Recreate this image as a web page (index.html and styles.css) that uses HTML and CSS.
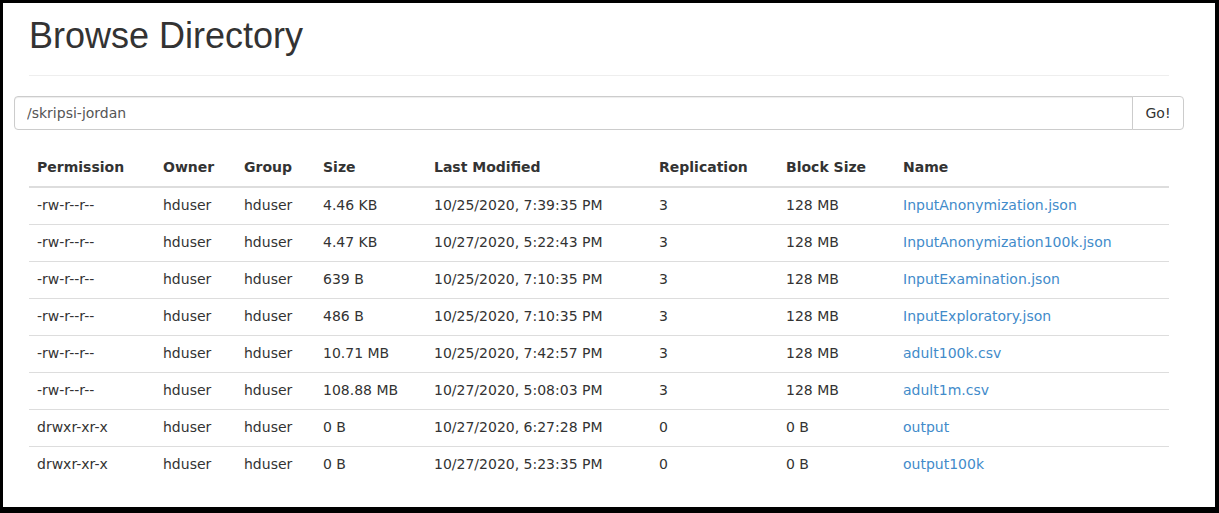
FILE: index.html
```html
<!DOCTYPE html>
<html>
<head>
<meta charset="utf-8">
<link rel="stylesheet" href="styles.css">
</head>
<body>
<div class="frame">
  <div class="container">
    <div class="page-header">
      <h1>Browse Directory</h1>
    </div>
    <form class="input-group">
      <input class="path" type="text" value="/skripsi-jordan">
      <button class="go" type="button">Go!</button>
    </form>
    <table class="listing">
      <thead>
        <tr><th>Permission</th><th>Owner</th><th>Group</th><th>Size</th><th>Last Modified</th><th>Replication</th><th>Block Size</th><th>Name</th></tr>
      </thead>
      <tbody>
        <tr><td>-rw-r--r--</td><td>hduser</td><td>hduser</td><td>4.46 KB</td><td>10/25/2020, 7:39:35 PM</td><td>3</td><td>128 MB</td><td><a href="#">InputAnonymization.json</a></td></tr>
        <tr><td>-rw-r--r--</td><td>hduser</td><td>hduser</td><td>4.47 KB</td><td>10/27/2020, 5:22:43 PM</td><td>3</td><td>128 MB</td><td><a href="#">InputAnonymization100k.json</a></td></tr>
        <tr><td>-rw-r--r--</td><td>hduser</td><td>hduser</td><td>639 B</td><td>10/25/2020, 7:10:35 PM</td><td>3</td><td>128 MB</td><td><a href="#">InputExamination.json</a></td></tr>
        <tr><td>-rw-r--r--</td><td>hduser</td><td>hduser</td><td>486 B</td><td>10/25/2020, 7:10:35 PM</td><td>3</td><td>128 MB</td><td><a href="#">InputExploratory.json</a></td></tr>
        <tr><td>-rw-r--r--</td><td>hduser</td><td>hduser</td><td>10.71 MB</td><td>10/25/2020, 7:42:57 PM</td><td>3</td><td>128 MB</td><td><a href="#">adult100k.csv</a></td></tr>
        <tr><td>-rw-r--r--</td><td>hduser</td><td>hduser</td><td>108.88 MB</td><td>10/27/2020, 5:08:03 PM</td><td>3</td><td>128 MB</td><td><a href="#">adult1m.csv</a></td></tr>
        <tr><td>drwxr-xr-x</td><td>hduser</td><td>hduser</td><td>0 B</td><td>10/27/2020, 6:27:28 PM</td><td>0</td><td>0 B</td><td><a href="#">output</a></td></tr>
        <tr><td>drwxr-xr-x</td><td>hduser</td><td>hduser</td><td>0 B</td><td>10/27/2020, 5:23:35 PM</td><td>0</td><td>0 B</td><td><a href="#">output100k</a></td></tr>
      </tbody>
    </table>
  </div>
</div>
</body>
</html>
```

FILE: styles.css
```css
html, body {
  margin: 0;
  padding: 0;
  background: #000;
}
body {
  padding: 3px 4px 6px 3px;
  font-family: "DejaVu Sans", sans-serif;
  font-size: 14px;
  color: #333;
}
.frame {
  background: #fff;
  height: 504px;
  overflow: hidden;
}
.container {
  width: 1140px;
  margin-left: 11px;
  padding: 0 15px;
}
.page-header {
  padding-top: 10px;
  padding-bottom: 19px;
  border-bottom: 1px solid #eee;
  margin-bottom: 20px;
}
h1 {
  margin: 0;
  font-family: "Liberation Sans", Arial, sans-serif;
  font-weight: 400;
  font-size: 36px;
  line-height: 1.1;
  color: #333;
  padding-top: 3px;
}
.input-group {
  display: flex;
  margin: 0 -15px;
  height: 34px;
}
.path {
  flex: 1;
  box-sizing: border-box;
  height: 34px;
  margin: 0;
  border: 1px solid #ccc;
  border-radius: 4px 0 0 4px;
  padding: 6px 12px;
  font-family: "DejaVu Sans", sans-serif;
  font-size: 14px;
  color: #555;
  outline: none;
  box-shadow: inset 0 1px 1px rgba(0,0,0,0.075);
}
.go {
  box-sizing: border-box;
  height: 34px;
  width: 52px;
  margin: 0 0 0 -1px;
  border: 1px solid #ccc;
  border-radius: 0 4px 4px 0;
  background: #fff;
  font-family: "DejaVu Sans", sans-serif;
  font-size: 14px;
  color: #333;
  padding: 6px 12px;
}
.listing {
  width: 100%;
  border-collapse: collapse;
  margin-top: 19px;
}
.listing th, .listing td {
  text-align: left;
  padding: 8px;
  line-height: 20px;
  vertical-align: top;
  white-space: nowrap;
}
.listing th {
  font-weight: 700;
  padding-bottom: 9px;
  border-bottom: 2px solid #ddd;
}
.listing td {
  padding-top: 7px;
  padding-bottom: 9px;
  border-top: 1px solid #ddd;
}
.listing tbody tr:first-child td {
  border-top: 0;
}
.listing a {
  color: #428bca;
  text-decoration: none;
}
.listing th:nth-child(1) { width: 110px; }
.listing th:nth-child(2) { width: 65px; }
.listing th:nth-child(3) { width: 63px; }
.listing th:nth-child(4) { width: 95px; }
.listing th:nth-child(5) { width: 209px; }
.listing th:nth-child(6) { width: 111px; }
.listing th:nth-child(7) { width: 101px; }
```
